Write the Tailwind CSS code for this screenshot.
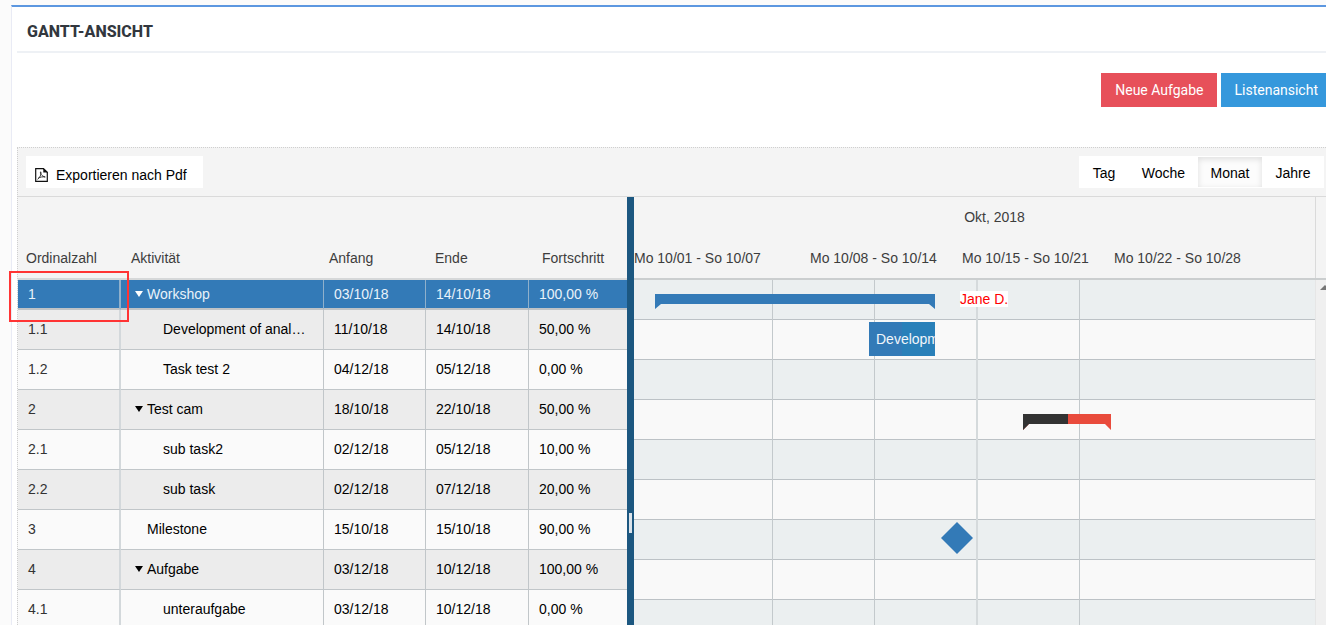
<!DOCTYPE html>
<html lang="de">
<head>
<meta charset="utf-8">
<meta name="viewport" content="width=device-width, initial-scale=1">
<title>Gantt-Ansicht</title>
<script src="https://cdn.jsdelivr.net/npm/@tailwindcss/browser@4"></script>
</head>
<body class="h-screen overflow-hidden bg-[#fbfbfb] pt-[5px] pl-[11px] font-['Liberation_Sans',Arial,sans-serif] text-sm text-black">
<main class="relative flex h-full flex-col border-t-2 border-l border-t-[#5c97e0] border-l-[#e9ebf5] bg-white pl-[5px]">
  <header class="border-b-2 border-[#eef1f5] px-[10px] pt-[13px] pb-[7px]">
    <h1 class="font-['Roboto',sans-serif] text-base leading-6 font-extrabold text-[#32373e]">GANTT-ANSICHT</h1>
  </header>

  <div class="flex justify-end gap-1 pt-5 pb-10 font-['Roboto',sans-serif] text-white">
    <button type="button" class="h-[34px] bg-[#e7505a] px-[14px]">Neue Aufgabe</button>
    <button type="button" class="h-[34px] bg-[#3598dc] pr-2 pl-[13px]">Listenansicht</button>
  </div>

  <section class="flex min-h-0 flex-1 flex-col border-t border-l border-dotted border-[#cfcfcf] bg-[#f4f4f4]">
    <div class="flex shrink-0 items-center justify-between border-b border-[#dadada] py-2 pr-[2px] pl-2">
      <button type="button" class="flex h-8 items-center gap-2 bg-white pr-4 pl-[9px] pt-[5px]">
        <svg class="h-[14px] w-[13px]" viewBox="0 0 13 14" fill="none" stroke="#111" stroke-width="1.2" aria-hidden="true">
          <path d="M.7.7h7.8l3.8 3.6v9H.7z"/>
          <path d="M8.5.7v3.6h3.8z" fill="#111" stroke-width=".4"/>
          <path d="M5.600 3.600c-.7 1.800.9 4.600 4.700 5.400M5.900 4c.7 2.600-1.200 5.600-3.400 7.300M3.200 10.300c1.800-1.300 4.600-1.700 7-1.300" stroke-width=".8"/>
        </svg>
        <span>Exportieren nach Pdf</span>
      </button>
      <div class="flex h-8 items-stretch bg-white" role="group" aria-label="Zeitraum">
        <button type="button" class="w-[50px] pt-[2px]">Tag</button>
        <button type="button" class="w-[69px] pt-[2px]">Woche</button>
        <button type="button" aria-pressed="true" class="my-px w-16 bg-[#fcfcfc] pt-[2px] shadow-[inset_0_2px_6px_rgba(0,0,0,0.12)]">Monat</button>
        <button type="button" class="w-[62px] pt-[2px]">Jahre</button>
      </div>
    </div>

    <div class="flex min-h-0 flex-1">
      <div class="w-[609px] shrink-0 overflow-hidden">
        <table class="w-full table-fixed border-separate border-spacing-0 text-left whitespace-nowrap">
          <colgroup>
            <col class="w-[103px]"><col class="w-[203px]"><col class="w-[102px]"><col class="w-[103px]"><col>
          </colgroup>
          <thead class="text-[#3d3d3d]">
            <tr class="h-[83px] align-bottom *:border-b-2 *:border-[#d6d8d9] *:pb-[10px] *:font-normal">
              <th scope="col" class="pl-2">Ordinalzahl</th>
              <th scope="col" class="pl-[10px]">Aktivität</th>
              <th scope="col" class="pl-[5px]">Anfang</th>
              <th scope="col" class="pl-[9px]">Ende</th>
              <th scope="col" class="pl-[13px]">Fortschritt</th>
            </tr>
          </thead>
          <tbody class="*:h-10 *:odd:bg-[#fafafa] *:even:bg-[#ececec]">
            <tr class="h-[30px]! bg-[#337ab7]! text-[#e9f2fa] *:border-b-2 *:border-b-[#bfc3c6] *:border-r-[#8fb0cb] *:pl-[10px]">
              <td class="border-r-2">1</td>
              <td class="border-r"><span class="flex items-center gap-1 pl-1"><svg class="size-2" viewBox="0 0 8 8" aria-hidden="true"><path d="M0 1h8L4 7z" fill="#fff"/></svg>Workshop</span></td>
              <td class="border-r">03/10/18</td><td class="border-r">14/10/18</td><td>100,00 %</td>
            </tr>
            <tr class="*:border-b *:border-[#c1c6c9] *:pb-[2px] *:pl-[10px]">
              <td class="border-r-2 border-r-[#d3d8db]! text-[#333]">1.1</td>
              <td class="border-r pr-[15px]"><span class="block truncate pl-8">Development of analysis</span></td>
              <td class="border-r">11/10/18</td><td class="border-r">14/10/18</td><td>50,00 %</td>
            </tr>
            <tr class="*:border-b *:border-[#c1c6c9] *:pb-[2px] *:pl-[10px]">
              <td class="border-r-2 border-r-[#d3d8db]! text-[#333]">1.2</td>
              <td class="border-r"><span class="pl-8">Task test 2</span></td>
              <td class="border-r">04/12/18</td><td class="border-r">05/12/18</td><td>0,00 %</td>
            </tr>
            <tr class="*:border-b *:border-[#c1c6c9] *:pb-[2px] *:pl-[10px]">
              <td class="border-r-2 border-r-[#d3d8db]! text-[#333]">2</td>
              <td class="border-r"><span class="flex items-center gap-1 pl-1"><svg class="size-2" viewBox="0 0 8 8" aria-hidden="true"><path d="M0 1h8L4 7z"/></svg>Test cam</span></td>
              <td class="border-r">18/10/18</td><td class="border-r">22/10/18</td><td>50,00 %</td>
            </tr>
            <tr class="*:border-b *:border-[#c1c6c9] *:pb-[2px] *:pl-[10px]">
              <td class="border-r-2 border-r-[#d3d8db]! text-[#333]">2.1</td>
              <td class="border-r"><span class="pl-8">sub task2</span></td>
              <td class="border-r">02/12/18</td><td class="border-r">05/12/18</td><td>10,00 %</td>
            </tr>
            <tr class="*:border-b *:border-[#c1c6c9] *:pb-[2px] *:pl-[10px]">
              <td class="border-r-2 border-r-[#d3d8db]! text-[#333]">2.2</td>
              <td class="border-r"><span class="pl-8">sub task</span></td>
              <td class="border-r">02/12/18</td><td class="border-r">07/12/18</td><td>20,00 %</td>
            </tr>
            <tr class="*:border-b *:border-[#c1c6c9] *:pb-[2px] *:pl-[10px]">
              <td class="border-r-2 border-r-[#d3d8db]! text-[#333]">3</td>
              <td class="border-r"><span class="pl-4">Milestone</span></td>
              <td class="border-r">15/10/18</td><td class="border-r">15/10/18</td><td>90,00 %</td>
            </tr>
            <tr class="*:border-b *:border-[#c1c6c9] *:pb-[2px] *:pl-[10px]">
              <td class="border-r-2 border-r-[#d3d8db]! text-[#333]">4</td>
              <td class="border-r"><span class="flex items-center gap-1 pl-1"><svg class="size-2" viewBox="0 0 8 8" aria-hidden="true"><path d="M0 1h8L4 7z"/></svg>Aufgabe</span></td>
              <td class="border-r">03/12/18</td><td class="border-r">10/12/18</td><td>100,00 %</td>
            </tr>
            <tr class="*:border-b *:border-[#c1c6c9] *:pb-[2px] *:pl-[10px]">
              <td class="border-r-2 border-r-[#d3d8db]! text-[#333]">4.1</td>
              <td class="border-r"><span class="pl-8">unteraufgabe</span></td>
              <td class="border-r">03/12/18</td><td class="border-r">10/12/18</td><td>0,00 %</td>
            </tr>
          </tbody>
        </table>
      </div>

      <div class="flex w-[7px] shrink-0 justify-center bg-[#1c5780] pt-[316px]" role="separator" aria-orientation="vertical">
        <span class="h-5 w-[3px] bg-[#dbe3ea]"></span>
      </div>

      <div class="flex min-w-0 flex-1 flex-col overflow-hidden">
        <div class="flex shrink-0 border-b-2 border-[#cbcecf] text-[#3d3d3d]">
          <div class="min-w-0 flex-1 overflow-hidden border-r border-[#dadada] whitespace-nowrap">
            <div class="pt-[10px] pl-10 text-center leading-5">Okt, 2018</div>
            <div class="flex pt-[21px] pb-[10px] leading-5">
              <div class="w-[166px] shrink-0">Mo 10/01 - So 10/07</div>
              <div class="w-[152px] shrink-0 pl-[10px]">Mo 10/08 - So 10/14</div>
              <div class="w-[152px] shrink-0 pl-[10px]">Mo 10/15 - So 10/21</div>
              <div class="w-[152px] shrink-0 pl-[10px]">Mo 10/22 - So 10/28</div>
            </div>
          </div>
          <div class="w-[10px] shrink-0"></div>
        </div>

        <div class="flex">
          <div class="relative min-w-0 flex-1">
            <div class="*:h-10 *:border-b *:border-[#bcc2c6] *:odd:bg-[#ebeff0] *:even:bg-[#f9f9f9]">
              <div></div><div></div><div></div><div></div><div></div><div></div><div></div><div></div><div></div>
            </div>
            <div class="absolute inset-0 flex *:border-[#c3c9cc]">
              <div class="w-[139px] border-r"></div>
              <div class="w-[102px] border-r"></div>
              <div class="w-[103px] border-r-2 border-[#d5dadc]!"></div>
              <div class="w-[102px] border-r"></div>
            </div>
            <svg class="absolute top-[14px] left-[21px] h-[15px] w-[280px]" viewBox="0 0 280 15" aria-label="Workshop"><path d="M0 0H280V15L274 10H6L0 15z" fill="#337ab7"/></svg>
            <div class="absolute top-[11px] left-[326px] bg-white text-sm leading-4 text-[#f00]">Jane D.</div>
            <div class="absolute top-[42px] left-[235px] h-[34px] w-[66px] overflow-hidden bg-[#2980b9]">
              <div class="h-full w-1/2 bg-[#337ab7]"></div>
              <span class="absolute inset-0 pl-[7px] leading-[34px] text-[#f1f6fb]">Development</span>
            </div>
            <svg class="absolute top-[134px] left-[389px] h-4 w-[88px]" viewBox="0 0 88 16" aria-label="Test cam"><path d="M0 0H88V16L82 10H6L0 16z" fill="#e94b3c"/><path d="M0 0H45V10H6L0 16z" fill="#333"/></svg>
            <svg class="absolute top-[242px] left-[307px] size-8" viewBox="0 0 32 32" aria-label="Milestone"><path d="M16 0 32 16 16 32 0 16z" fill="#337ab7"/></svg>
          </div>
          <div class="w-[11px] shrink-0 overflow-hidden border-l border-[#e6e6e6] bg-[#f0f0f0] pt-[5px] pl-1">
            <svg class="h-[5px] w-[10px]" viewBox="0 0 10 5" aria-hidden="true"><path d="M0 5 5 0l5 5z" fill="#777"/></svg>
          </div>
        </div>
      </div>
    </div>
  </section>

  <div class="pointer-events-none absolute top-[264px] left-[-3px] h-[51px] w-[120px] border-2 border-[#ff3434]"></div>
</main>
</body>
</html>
